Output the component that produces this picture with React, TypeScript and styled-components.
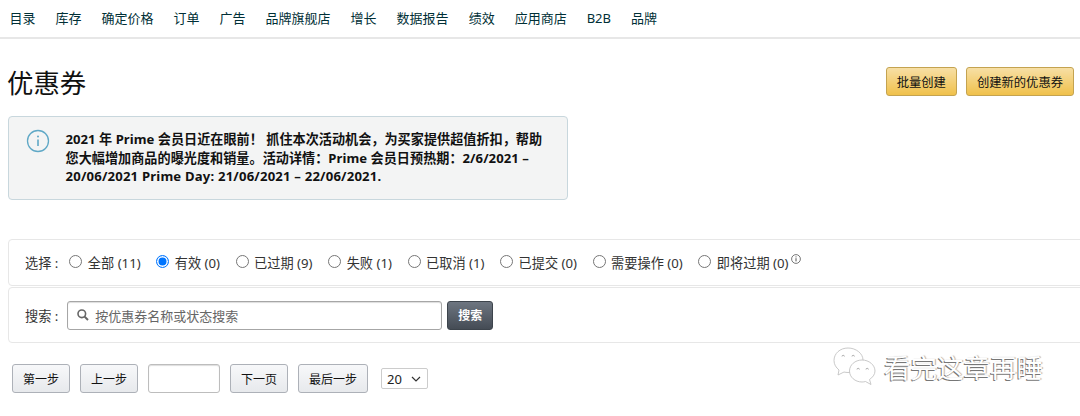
import React from "react";
import styled, { createGlobalStyle } from "styled-components";

const Global = createGlobalStyle`
  html, body { margin: 0; padding: 0; background: #fff; }
  body { width: 1080px; height: 416px; overflow: hidden; font-family: "Noto Sans", "Noto Sans CJK SC", sans-serif; color: #111; }
`;

const Page = styled.div`
  position: relative;
  width: 1080px;
  height: 416px;
  overflow: hidden;
`;

const Nav = styled.nav`
  display: flex;
  align-items: center;
  gap: 20px;
  height: 37px;
  padding-left: 9.5px;
  border-bottom: 2px solid #e7e7e7;
  font-size: 13px;
  color: #002f36;
`;

const NavItem = styled.span`
  white-space: nowrap;
  line-height: 37px;
`;

const Header = styled.header`
  display: flex;
  align-items: flex-start;
  justify-content: space-between;
  height: 77px;
  padding: 0 6px 0 7px;
`;

const Title = styled.h1`
  margin: 25px 0 0;
  font-size: 26.4px;
  font-weight: 400;
  line-height: 38px;
  color: #111;
`;

const Actions = styled.div`
  display: flex;
  gap: 9px;
  margin-top: 28px;
`;

const PrimaryButton = styled.button`
  box-sizing: border-box;
  height: 29px;
  padding: 0 10px;
  border: 1px solid #c4a350;
  border-radius: 3px;
  background: linear-gradient(#f7dfa5, #f0c14b);
  font: 12.3px "Noto Sans", "Noto Sans CJK SC", sans-serif;
  color: #111;
  white-space: nowrap;
`;

const Notice = styled.section`
  box-sizing: border-box;
  display: flex;
  width: 560px;
  height: 84px;
  margin-left: 7.5px;
  padding: 13px 10px 0 17px;
  gap: 16px;
  background: #f3f4f4;
  border: 1px solid #c8d7dd;
  border-radius: 4px;
`;

const NoticeIcon = styled.svg`
  flex: none;
  width: 24px;
  height: 24px;
  margin-top: -1px;
`;

const NoticeText = styled.div`
  width: 490px;
`;

const NoticeLine = styled.p<{ $track: number }>`
  margin: 0;
  font-size: 13.1px;
  font-weight: 700;
  line-height: 18.6px;
  letter-spacing: ${(p) => p.$track}px;
  color: #111;
  white-space: nowrap;
`;

const Panel = styled.section<{ $height: number }>`
  box-sizing: border-box;
  display: flex;
  align-items: center;
  width: 1090px;
  height: ${(p) => p.$height}px;
  margin-left: 8px;
  padding-left: 16px;
  border: 1px solid #e7e7e7;
  border-radius: 4px;
  font-size: 13.2px;
  color: #333;
`;

const Filters = styled(Panel)`
  margin-top: 39px;
  margin-bottom: 1px;
  padding-bottom: 1px;
`;

const Label = styled.span<{ $gap: number }>`
  white-space: nowrap;
  margin-right: ${(p) => p.$gap}px;
`;

const RadioItem = styled.label`
  display: inline-flex;
  align-items: center;
  margin-right: 15.6px;
  white-space: nowrap;
`;

const RadioMark = styled.span<{ $on?: boolean }>`
  box-sizing: border-box;
  display: inline-block;
  width: 13px;
  height: 13px;
  margin: -2px 5.5px 0 0;
  border-radius: 50%;
  border: ${(p) => (p.$on ? "1px solid #0075ff" : "1px solid #767676")};
  background: #fff;
  box-shadow: ${(p) => (p.$on ? "inset 0 0 0 1.5px #fff, inset 0 0 0 7px #0075ff" : "none")};
`;

const Tip = styled.svg`
  width: 10px;
  height: 10px;
  margin: -6px 0 0 3px;
`;

const SearchBox = styled.div`
  box-sizing: border-box;
  display: flex;
  align-items: center;
  width: 375px;
  height: 29px;
  padding-left: 8px;
  gap: 5px;
  border: 1px solid #a6a6a6;
  border-radius: 3px;
  box-shadow: inset 0 1px 1px #ddd;
  color: #666;
  font-size: 13px;
  white-space: nowrap;
`;

const SearchGo = styled.button`
  box-sizing: border-box;
  width: 46px;
  height: 29px;
  margin-left: 5px;
  border: 1px solid #3d444c;
  border-radius: 3px;
  background: linear-gradient(#6d7580, #454c55);
  color: #fff;
  font: 700 12px "Noto Sans", "Noto Sans CJK SC", sans-serif;
`;

const Pager = styled.div`
  display: flex;
  align-items: center;
  gap: 10px;
  margin: 21px 0 0 12px;
`;

const PageButton = styled.button`
  box-sizing: border-box;
  height: 29px;
  padding: 0 10px;
  border: 1px solid #adb1b8;
  border-radius: 3px;
  background: linear-gradient(#f7f8fa, #e7e9ec);
  color: #111;
  font: 12px "Noto Sans", "Noto Sans CJK SC", sans-serif;
  white-space: nowrap;
`;

const PageInput = styled.div`
  box-sizing: border-box;
  width: 72px;
  height: 29px;
  border: 1px solid #bdbdbd;
  border-radius: 3px;
  box-shadow: inset 0 1px 1px #ddd;
`;

const PageSize = styled.div`
  box-sizing: border-box;
  display: flex;
  align-items: center;
  justify-content: space-between;
  width: 47px;
  height: 21px;
  margin-left: 3px;
  padding: 0 6px 0 5px;
  border: 1px solid #ccc;
  border-radius: 2px;
  font-size: 13px;
  color: #222;
`;

const Watermark = styled.div`
  position: absolute;
  left: 833px;
  top: 346px;
  display: flex;
  align-items: center;
  gap: 8px;
`;

const WatermarkText = styled.span`
  margin-top: 4px;
  font-size: 26.5px;
  line-height: 36px;
  color: #fff;
  white-space: nowrap;
  text-shadow: -1px 1px 0 #777, 1px 0 1px #aaa;
`;

const navItems = ["目录", "库存", "确定价格", "订单", "广告", "品牌旗舰店", "增长", "数据报告", "绩效", "应用商店", "B2B", "品牌"];
const radios = ["全部 (11)", "有效 (0)", "已过期 (9)", "失败 (1)", "已取消 (1)", "已提交 (0)", "需要操作 (0)", "即将过期 (0)"];

export default function App() {
  return (
    <Page>
      <Global />
      <Nav>
        {navItems.map((n) => (
          <NavItem key={n}>{n}</NavItem>
        ))}
      </Nav>
      <Header>
        <Title>优惠券</Title>
        <Actions>
          <PrimaryButton>批量创建</PrimaryButton>
          <PrimaryButton>创建新的优惠券</PrimaryButton>
        </Actions>
      </Header>
      <Notice>
        <NoticeIcon viewBox="0 0 24 24" fill="none">
          <circle cx="12" cy="12" r="10.5" stroke="#5fa8c6" strokeWidth="1.3" />
          <circle cx="12" cy="7.5" r="1" fill="#5fa8c6" />
          <path d="M12 10.5v6.5" stroke="#5fa8c6" strokeWidth="1.6" />
        </NoticeIcon>
        <NoticeText>
          <NoticeLine $track={0.04}>2021 年 Prime 会员日近在眼前！ 抓住本次活动机会，为买家提供超值折扣，帮助</NoticeLine>
          <NoticeLine $track={0.05}>您大幅增加商品的曝光度和销量。活动详情：Prime 会员日预热期：2/6/2021 –</NoticeLine>
          <NoticeLine $track={0.2}>20/06/2021 Prime Day: 21/06/2021 – 22/06/2021.</NoticeLine>
        </NoticeText>
      </Notice>
      <Filters $height={47}>
        <Label $gap={11}>选择 :</Label>
        {radios.map((r, i) => (
          <RadioItem key={r}>
            <RadioMark $on={i === 1} />
            {r}
            {i === 7 && (
              <Tip viewBox="0 0 10 10" fill="none">
                <circle cx="5" cy="5" r="4.4" stroke="#555" strokeWidth="0.8" />
                <path d="M5 4.2v3.2M5 2.4v1" stroke="#555" strokeWidth="1" />
              </Tip>
            )}
          </RadioItem>
        ))}
      </Filters>
      <Panel $height={56}>
        <Label $gap={9}>搜索 :</Label>
        <SearchBox>
          <svg width="14" height="14" viewBox="0 0 14 14" fill="none">
            <circle cx="5.8" cy="5.8" r="3.8" stroke="#666" strokeWidth="1.6" />
            <path d="M8.6 8.6l3.4 3.4" stroke="#666" strokeWidth="2" />
          </svg>
          按优惠券名称或状态搜索
        </SearchBox>
        <SearchGo>搜索</SearchGo>
      </Panel>
      <Pager>
        <PageButton>第一步</PageButton>
        <PageButton>上一步</PageButton>
        <PageInput />
        <PageButton>下一页</PageButton>
        <PageButton>最后一步</PageButton>
        <PageSize>
          20
          <svg width="10" height="6" viewBox="0 0 10 6" fill="none">
            <path d="M1 1l4 4 4-4" stroke="#333" strokeWidth="1.2" />
          </svg>
        </PageSize>
      </Pager>
      <Watermark>
        <svg width="43" height="38" viewBox="0 0 43 38" fill="#fff" stroke="#bbb" strokeWidth="0.8">
          <path d="M15 1C7 1 1 6.500 1 13.500c0 4 2 7 5 9.500l-1 5 6-3c1.300.3 2.700.5 4 .5 8 0 15-6 15-12.500S23 1 15 1z" />
          <path d="M29 13c-7 0-12.500 5-12.500 11S22 35 29 35c1.300 0 2.500-.2 3.500-.5l5.500 3-1.500-5C39.500 30.500 42 27.500 42 24c0-6-6-11-13-11z" />
          <path d="M9 9.500a1.200 1.200 0 0 1 2.400 0M19 9.500a1.200 1.200 0 0 1 2.400 0M24 22.500a1.200 1.200 0 0 1 2.400 0M33 22.500a1.200 1.200 0 0 1 2.400 0" fill="none" stroke="#999" />
        </svg>
        <WatermarkText>看完这章再睡</WatermarkText>
      </Watermark>
    </Page>
  );
}
